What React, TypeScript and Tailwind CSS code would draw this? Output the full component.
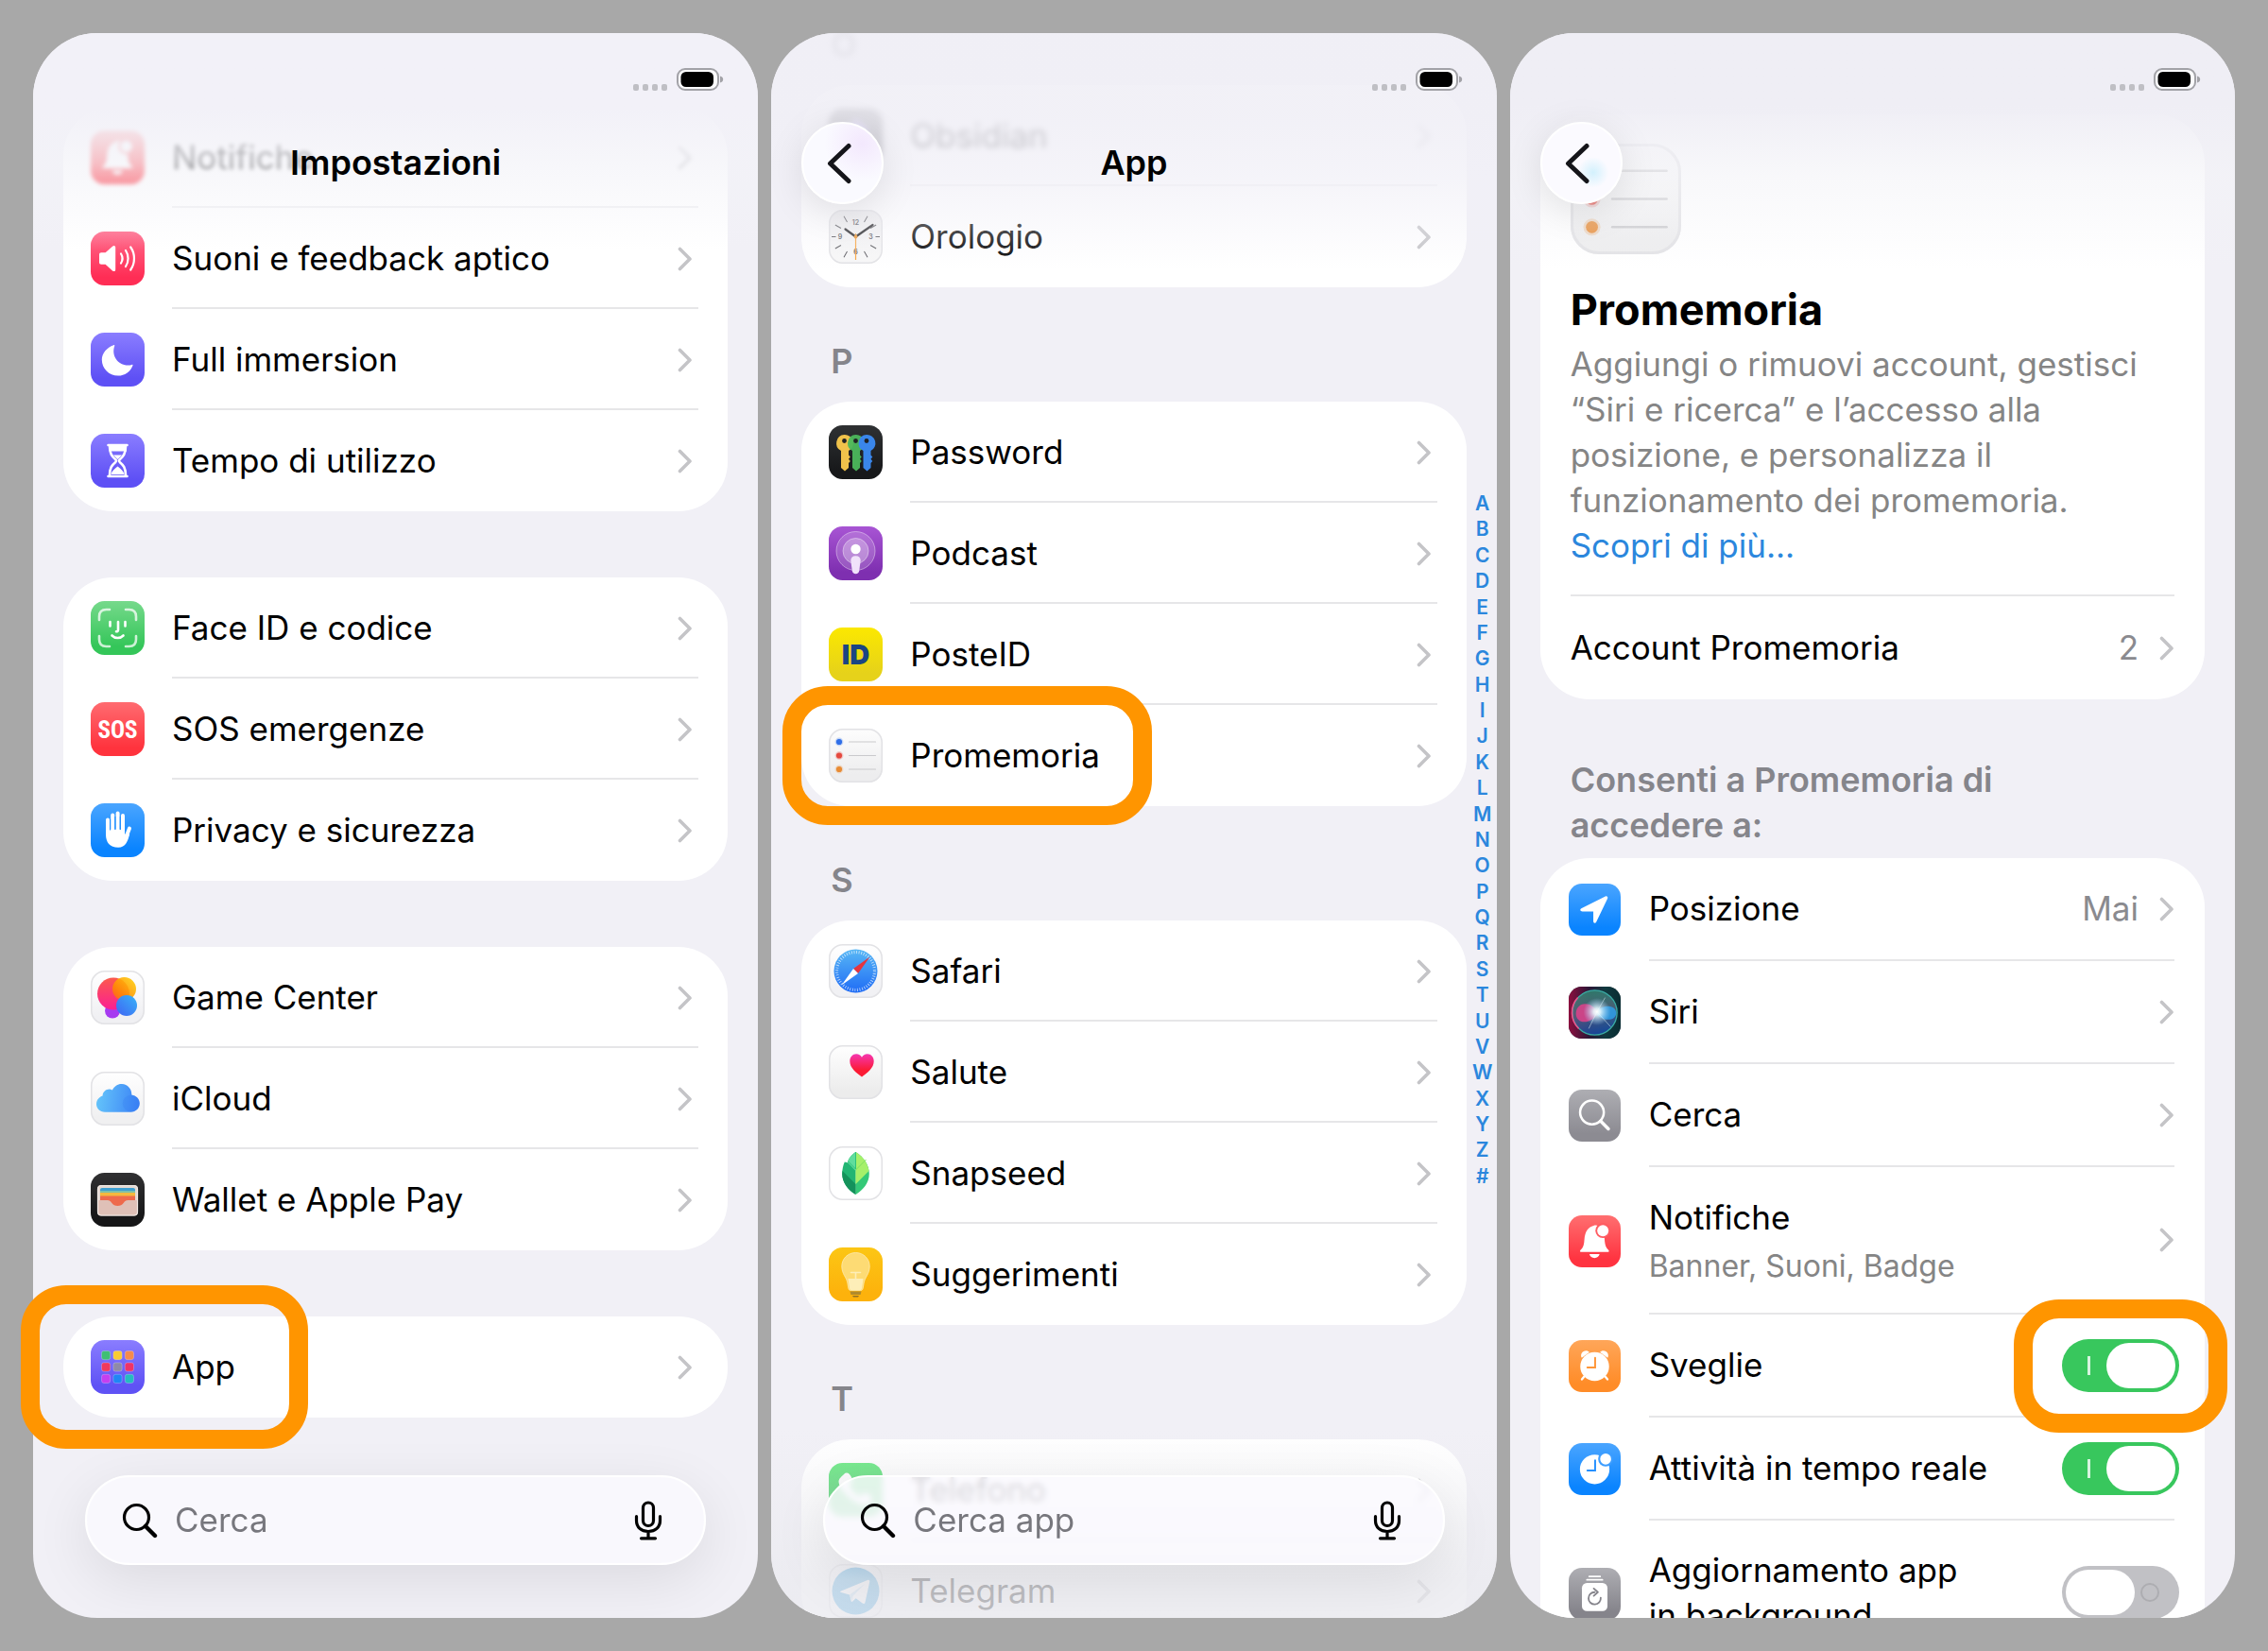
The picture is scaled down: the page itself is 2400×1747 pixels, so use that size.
import type { ReactNode } from "react";
import clsx from "clsx";

type IconName = keyof typeof icons;

type Item = {
  icon: IconName;
  label: string;
  className?: string;
};

const SETTINGS_GROUPS: Item[][] = [
  [
    { icon: "notifications", label: "Notifiche", className: "blur-[2px]" },
    { icon: "sounds", label: "Suoni e feedback aptico" },
    { icon: "focus", label: "Full immersion" },
    { icon: "screenTime", label: "Tempo di utilizzo" },
  ],
  [
    { icon: "faceId", label: "Face ID e codice" },
    { icon: "sos", label: "SOS emergenze" },
    { icon: "privacy", label: "Privacy e sicurezza" },
  ],
  [
    { icon: "gameCenter", label: "Game Center" },
    { icon: "icloud", label: "iCloud" },
    { icon: "wallet", label: "Wallet e Apple Pay" },
  ],
  [{ icon: "apps", label: "App" }],
];

const APP_SECTIONS: { letter: string; items: Item[]; className?: string }[] = [
  {
    letter: "O",
    className: "blur-[3px]",
    items: [
      { icon: "obsidian", label: "Obsidian", className: "blur-[3px]" },
      { icon: "clock", label: "Orologio" },
    ],
  },
  {
    letter: "P",
    items: [
      { icon: "passwords", label: "Password" },
      { icon: "podcast", label: "Podcast" },
      { icon: "posteId", label: "PosteID" },
      { icon: "reminders", label: "Promemoria" },
    ],
  },
  {
    letter: "S",
    items: [
      { icon: "safari", label: "Safari" },
      { icon: "health", label: "Salute" },
      { icon: "snapseed", label: "Snapseed" },
      { icon: "tips", label: "Suggerimenti" },
    ],
  },
  {
    letter: "T",
    items: [
      { icon: "phone", label: "Telefono" },
      { icon: "telegram", label: "Telegram" },
    ],
  },
];

const INDEX_LETTERS = "ABCDEFGHIJKLMNOPQRSTUVWXYZ#".split("");

function Tile({ id, from, to, outline, children }: { id: string; from: string; to: string; outline?: boolean; children?: ReactNode }) {
  return (
    <svg viewBox="0 0 57 57" className="h-full w-full" aria-hidden="true">
      <defs>
        <linearGradient id={`tile-${id}`} x1="0" y1="0" x2="0" y2="1">
          <stop offset="0" stopColor={from} />
          <stop offset="0.85" stopColor={to} />
        </linearGradient>
      </defs>
      <rect width="57" height="57" rx="14.500" fill={`url(#tile-${id})`} />
      {outline && <rect x="0.75" y="0.75" width="55.5" height="55.5" rx="14" fill="none" stroke="#e2e2e5" strokeWidth="1.5" />}
      {children}
    </svg>
  );
}

function ReminderLines() {
  return (
    <>
      {[
        [14, "#2f6fe8"],
        [28.5, "#e5493f"],
        [43, "#e88b34"],
      ].map(([y, color]) => (
        <g key={y}>
          <circle cx="11" cy={y} r="4.4" fill={color as string} opacity="0.25" />
          <circle cx="11" cy={y} r="3.1" fill={color as string} />
          <path d={`M21.5 ${y}H49.5`} stroke="#c9c9cc" strokeWidth="1.2" strokeLinecap="round" />
        </g>
      ))}
    </>
  );
}

const icons = {
  notifications: (
    <Tile id="notifications" from="#ff6f70" to="#ff3340">
      <path
        d="M12.4 39.5c0-1.2 1.2-2.300 2.400-3.600 1.600-1.800 2-4.600 2.400-9.400.6-8 3.600-13.500 11.300-15.500 1.300-.4 2.700-.2 3.600.3a8 8 0 0 0 5 12.800l2.100.3c.3 5.600.8 9.500 2.600 11.500 1.200 1.300 2.400 2.400 2.400 3.600 0 .4-.4.6-.9.6H13.300c-.5 0-.9-.2-.9-.6z"
        fill="#fff"
      />
      <circle cx="37.500" cy="16.800" r="8.200" fill="#ff5c62" />
      <circle cx="37.500" cy="16.800" r="6.200" fill="#fff" />
      <path d="M22.700 42.500h11.200c-.7 2.700-2.800 4.300-5.600 4.300s-4.900-1.600-5.600-4.300z" fill="#fff" />
    </Tile>
  ),
  sounds: (
    <Tile id="sounds" from="#ff6c8c" to="#ff2d55">
      <path d="M9 24.500c0-1.400.8-2.200 2.200-2.200h4.400l7.400-6.600c1.500-1.300 3.200-.7 3.200 1.200v23.300c0 1.900-1.700 2.500-3.200 1.200l-7.400-6.600h-4.400C9.800 34.800 9 34 9 32.600z" fill="#fff" />
      <path d="M32 23.500c1.900 3 1.900 7 0 10M37 20c3.400 5 3.400 12 0 17M42.200 16.500c5 7 5 17 0 24" fill="none" stroke="#fff" strokeWidth="2.200" strokeLinecap="round" />
    </Tile>
  ),
  focus: (
    <Tile id="focus" from="#8a7dff" to="#5e50f5">
      <path
        d="M24.200 13.200c.7-.3 1.300.3 1 1-3.600 9.800 3.400 20.400 14.500 20.300 1.300 0 2.500-.2 3.700-.6.800-.3 1.400.3 1 1.100C41.800 41.500 36 45.600 29 45.600c-9.700 0-17.200-7.500-17.200-17 0-6.800 5.300-13 12.400-15.400z"
        fill="#fff"
      />
    </Tile>
  ),
  screenTime: (
    <Tile id="screenTime" from="#8a7dff" to="#5e50f5">
      <path
        d="M18.500 12h20M18.500 45h20M20 13c0 8 2.500 11 6.300 14.200.9.800.9 1.900 0 2.700C22.500 33 20 36 20 44M37 13c0 8-2.500 11-6.300 14.200-.9.800-.9 1.900 0 2.700C34.500 33 37 36 37 44"
        fill="none"
        stroke="#fff"
        strokeWidth="2.600"
        strokeLinecap="round"
      />
      <path d="M19 12h19v6.500H20zM21.500 43c.7-3.700 3.600-5.700 7-8.500 3.400 2.800 6.300 4.800 7 8.500zM24 22.500h9l-4.500 4.500z" fill="#fff" />
    </Tile>
  ),
  faceId: (
    <Tile id="faceId" from="#76d98b" to="#34c659">
      <g fill="none" stroke="#fff" strokeWidth="2.600" strokeLinecap="round">
        <path opacity="0.75" d="M9 20v-3.500C9 11.500 11.500 9 16.500 9H20M37 9h3.500c5 0 7.500 2.500 7.500 7.500V20M48 37v3.500c0 5-2.500 7.500-7.500 7.500H37M20 48h-3.500C11.500 48 9 45.500 9 40.500V37" />
        <path d="M20.500 22v4.500M36.500 22v4.500M29 22v8.500c0 1.200-.7 1.800-2 1.800M22.500 36.500c3.400 3.400 8.600 3.400 12 0" />
      </g>
    </Tile>
  ),
  sos: (
    <Tile id="sos" from="#ff6b70" to="#ff333d">
      <text x="28.500" y="38" textAnchor="middle" fill="#fff" fontFamily="'Liberation Sans Narrow', 'Roboto Condensed', Roboto, sans-serif" fontWeight="700" fontSize="25">
        SOS
      </text>
    </Tile>
  ),
  privacy: (
    <Tile id="privacy" from="#4aa5ff" to="#0a84ff">
      <g stroke="#fff" strokeWidth="4" strokeLinecap="round" fill="none">
        <path d="M18 17.500V32M23.200 12.500V30M28.600 10.500V30M34 13V30M41 26.500l-3.500 9" />
      </g>
      <path d="M16 29c0-2 20 -2 20 0v4.500l1.500-2.300 3.700 1.600c-2 7-4.200 14-12 14C20 46.800 16 41 16 33z" fill="#fff" />
      <path d="M20.600 17v11.500M25.900 14v14M31.300 14v14" stroke="#1f8eff" strokeWidth="1" />
    </Tile>
  ),
  gameCenter: (
    <Tile id="gameCenter" from="#ffffff" to="#f0f0f3" outline>
      <defs>
        <linearGradient id="gc-red" x1="0.300" y1="0" x2="0.300" y2="1">
          <stop offset="0" stopColor="#fb5a4c" />
          <stop offset="1" stopColor="#fb1e93" />
        </linearGradient>
        <linearGradient id="gc-yellow" x1="1" y1="0" x2="0" y2="1">
          <stop offset="0" stopColor="#ffd60a" />
          <stop offset="0.650" stopColor="#ff8c00" />
          <stop offset="1" stopColor="#ff5a1f" />
        </linearGradient>
        <linearGradient id="gc-blue" x1="1" y1="0" x2="0" y2="1">
          <stop offset="0" stopColor="#38b4f8" />
          <stop offset="1" stopColor="#3f63f3" />
        </linearGradient>
      </defs>
      <circle cx="23" cy="42.500" r="8" fill="#a63af0" />
      <circle cx="24" cy="24.500" r="17" fill="url(#gc-red)" />
      <circle cx="35.500" cy="19.500" r="12.500" fill="url(#gc-yellow)" opacity="0.900" />
      <circle cx="38" cy="37" r="11" fill="url(#gc-blue)" />
    </Tile>
  ),
  icloud: (
    <Tile id="icloud" from="#ffffff" to="#f0f0f1" outline>
      <defs>
        <linearGradient id="cloud" x1="0" y1="0.500" x2="1" y2="0.600">
          <stop offset="0" stopColor="#64c4fa" />
          <stop offset="1" stopColor="#3b82f6" />
        </linearGradient>
      </defs>
      <path
        d="M15 42.700c-5.200 0-9-3.700-9-8.500 0-4.500 3-7.600 6.600-8.800.2-5.200 5.800-8.400 10.300-6C25 15.200 29 12.700 33 13c6 .5 10.300 5 10.300 11v.600c4.800.700 8.500 4.300 8.500 9 0 5.200-4 9.100-9.300 9.100z"
        fill="url(#cloud)"
      />
      <circle cx="42.600" cy="33.500" r="8.800" fill="#2f74f0" opacity="0.200" />
    </Tile>
  ),
  wallet: (
    <Tile id="wallet" from="#303032" to="#161617">
      <rect x="7" y="13" width="43" height="32.500" rx="4" fill="#e4d9d3" />
      <path d="M10 19v-1c0-1.200.9-2 2-2h33c1.100 0 2 .8 2 2v1z" fill="#3f9fd0" />
      <path d="M10 19h37v3H10z" fill="#7fc1a8" />
      <path d="M10 21h37v4H10z" fill="#f4b93e" />
      <path d="M10 24.500h37V35H10z" fill="#ee6a4c" />
      <path d="M7.500 29h10.300c2 0 3 1 4.300 2.800 1.700 2.200 3.600 3.300 6.400 3.300s4.700-1.100 6.400-3.300c1.300-1.800 2.300-2.800 4.300-2.800h10.300v13c0 2-1.200 3-3 3h-36c-1.800 0-3-1-3-3z" fill="#dfc0b7" />
      <rect x="7.500" y="13.500" width="42" height="31.500" rx="3.800" fill="none" stroke="#f1eae6" strokeWidth="1.200" />
    </Tile>
  ),
  apps: (
    <Tile id="apps" from="#8a7dff" to="#5f52f5">
      {["#3fbf74", "#f9cb33", "#f58b4c", "#f0395c", "#8f8aa8", "#ee3468", "#c63ff0", "#1f86f5", "#25bcc0"].map((fill, i) => (
        <rect
          key={fill}
          x={11.5 + (i % 3) * 12.4}
          y={11.5 + Math.floor(i / 3) * 12.4}
          width="9.200"
          height="9.200"
          rx="2.400"
          fill={fill}
          stroke="#fff"
          strokeOpacity="0.300"
          strokeWidth="0.800"
        />
      ))}
    </Tile>
  ),
  obsidian: (
    <Tile id="obsidian" from="#4a4a4e" to="#5f5f68">
      <path d="M28 10l12 9 3 15-10 14-16-6-3-14z" fill="#a58af5" />
    </Tile>
  ),
  clock: (
    <Tile id="clock" from="#ededee" to="#f7f7f7" outline>
      {Array.from({ length: 12 }, (_, i) => i)
        .filter((i) => i % 3 !== 0)
        .map((i) => (
          <path key={i} d="M28.500 3.500v7" transform={`rotate(${i * 30} 28.500 28.500)`} stroke="#55555a" strokeWidth="1" />
        ))}
      <path d="M3 28.500h4.500M49.500 28.500H54" stroke="#55555a" strokeWidth="1" />
      <g fill="#55555a" fontFamily="Inter, sans-serif" fontWeight="600" fontSize="7" textAnchor="middle">
        <text x="28.500" y="15.500">12</text>
        <text x="44.500" y="31">3</text>
        <text x="28.500" y="46.500">6</text>
        <text x="12" y="31">9</text>
      </g>
      <path d="M28.500 28.500L17.500 20.500M28.500 28.500L46.500 16" stroke="#1c1c1e" strokeWidth="2.200" strokeLinecap="round" />
      <path d="M28.500 25v28" stroke="#f7a33c" strokeWidth="1.200" />
      <circle cx="28.500" cy="28.500" r="1.900" fill="#e8912c" />
    </Tile>
  ),
  passwords: (
    <Tile id="passwords" from="#2f3133" to="#17181a">
      {[
        [16.5, "#f0c24b", 1],
        [28.5, "#4cb85c", 0.95],
        [40, "#3a86ea", 1],
      ].map(([x, fill, opacity]) => (
        <g key={x} transform={`translate(${x} 0)`} opacity={opacity}>
          <path d="M0 10a9 9 0 0 1 4.500 17v4.500l1.800 2-1.800 2.200 1.800 2.200-1.800 2.100v5L.5 48.500-3.500 45V27A9 9 0 0 1 0 10z" fill={fill as string} />
          <circle cx="0" cy="16.500" r="2.400" fill="#202224" />
        </g>
      ))}
    </Tile>
  ),
  podcast: (
    <Tile id="podcast" from="#a855d4" to="#7e2fb0">
      <circle cx="28.500" cy="26" r="20.500" fill="#fff" opacity="0.180" />
      <circle cx="28.500" cy="26" r="13.500" fill="#fff" opacity="0.280" />
      <circle cx="28.500" cy="26" r="20.500" fill="none" stroke="#fff" strokeOpacity="0.400" />
      <circle cx="28.500" cy="26" r="13.500" fill="none" stroke="#fff" strokeOpacity="0.400" />
      <circle cx="28.500" cy="24" r="5.200" fill="#fff" />
      <path d="M23.300 36c0-3 2-4.800 5.200-4.800s5.200 1.800 5.200 4.800l-1.400 10.500c-.4 2.600-1.600 3.800-3.800 3.800s-3.400-1.200-3.800-3.800z" fill="#f1e2fa" />
    </Tile>
  ),
  posteId: (
    <Tile id="posteId" from="#fbe800" to="#e6d21a">
      <text x="28.500" y="39" textAnchor="middle" fill="#1b4583" fontFamily="Inter, sans-serif" fontWeight="900" fontSize="29">
        ID
      </text>
    </Tile>
  ),
  reminders: (
    <Tile id="reminders" from="#fdfdfd" to="#ededee" outline>
      <ReminderLines />
    </Tile>
  ),
  safari: (
    <Tile id="safari" from="#ffffff" to="#f1f1f4" outline>
      <defs>
        <linearGradient id="compass" x1="0" y1="0" x2="0" y2="1">
          <stop offset="0" stopColor="#58b7f5" />
          <stop offset="1" stopColor="#1f6cf5" />
        </linearGradient>
      </defs>
      <circle cx="28.500" cy="28.500" r="23" fill="url(#compass)" />
      <circle cx="28.500" cy="28.500" r="20" fill="none" stroke="#fff" strokeOpacity="0.650" strokeWidth="3.200" strokeDasharray="0.900 1.718" />
      <path d="M43.500 13.500L26 26l5 5z" fill="#e5343f" />
      <path d="M13.500 43.500L26 26l5 5z" fill="#fff" />
    </Tile>
  ),
  health: (
    <Tile id="health" from="#ffffff" to="#ececec" outline>
      <defs>
        <linearGradient id="heart" x1="0" y1="0" x2="0" y2="1">
          <stop offset="0" stopColor="#f536b0" />
          <stop offset="0.700" stopColor="#fb1b35" />
        </linearGradient>
      </defs>
      <path d="M35 33.500C29 29 22.300 24 22.300 17c0-4.500 3-7.700 6.800-7.700 2.700 0 4.700 1.200 5.900 3.400 1.200-2.200 3.200-3.400 5.900-3.400 3.800 0 6.800 3.200 6.800 7.700 0 7-6.700 12-12.700 16.500z" fill="url(#heart)" />
    </Tile>
  ),
  snapseed: (
    <Tile id="snapseed" from="#ffffff" to="#ffffff" outline>
      <path d="M28.500 6v45C20 46 14.200 38 14.200 29c0-4.500 1-9 2.600-12.500l3.200.8c.5-4.500 4.500-8.800 8.500-11.300z" fill="#22b573" />
      <path d="M28.500 6c8 5 14.300 13.500 14.300 23S36.500 46 28.500 51z" fill="#34c977" />
      <path d="M28.500 6c7 4.300 12.500 11 14 20L28.500 40z" fill="#a6f06a" />
      <path d="M28.500 6c-4 2.500-8 6.800-8.500 11.300L28.500 26z" fill="#5fdd9c" />
      <path d="M14.500 26l14 14v11C20 46 14.200 38 14.200 29z" fill="#14925b" />
      <path d="M28.500 24l-8-8M28.500 24V6" stroke="#2fc27c" strokeWidth="1" />
      <path d="M28.500 25l11-11" stroke="#7fe05f" strokeWidth="1" />
    </Tile>
  ),
  tips: (
    <Tile id="tips" from="#fcc614" to="#fdb20c">
      <path
        d="M28.500 5.500c8.300 0 14.700 6.400 14.700 14.500 0 8-5 11.500-6 17.500l-1 5.500c-.3 1.700-1.200 2.600-2.800 2.600h-9.800c-1.600 0-2.500-.9-2.800-2.600l-1-5.500c-1-6-6-9.500-6-17.500 0-8.100 6.400-14.500 14.700-14.500z"
        fill="#fddb74"
        stroke="#fdeab0"
        strokeWidth="0.800"
      />
      <path d="M20.500 33h16l-1.500 10c-.2 1.500-1 2.300-2.400 2.300h-8.200c-1.400 0-2.200-.8-2.400-2.300z" fill="#fdeeb8" />
      <path d="M23.500 26.500h10M28.500 26.500V43" stroke="#fdeeb8" strokeWidth="1.600" fill="none" strokeLinecap="round" />
      <path d="M22.500 46.500h12l-1 3.500h-10z" fill="#b08a2c" />
      <path d="M25 51h7l-1 1.500h-5z" fill="#8f7026" />
    </Tile>
  ),
  phone: (
    <Tile id="phone" from="#5fe87a" to="#34c759">
      <path d="M16 12c3-3 6-1 8 3 1.500 3 1 5-1.500 7-1 1-1 2 0 4 2 3.500 4.500 6 8 8.500 1.800 1.200 3 1.200 4-.2 2-2.600 4-3 7-1.300 4 2.300 5.500 5 3 8-4 5-10 4.500-18-1S11 27 10.500 20c0-3.500 3-5.500 5.500-8z" fill="#fff" />
    </Tile>
  ),
  telegram: (
    <Tile id="telegram" from="#fdfdfe" to="#fdfdfe" outline>
      <circle cx="28.500" cy="28.500" r="25" fill="#2f9fe0" />
      <path d="M13 28.500l28-11.500c1.500-.600 2.600.3 2.200 2l-4.700 21.500c-.3 1.500-1.500 1.900-2.800 1l-7-5.300-3.500 3.400c-.8.7-1.400.5-1.600-.6L22 32.500l-9-2.500c-1.200-.4-1.200-1 0-1.500z" fill="#fff" />
      <path d="M22 32.500l16-11.500-12.500 13-1 5z" fill="#b9dcf2" />
    </Tile>
  ),
  location: (
    <Tile id="location" from="#4aa5ff" to="#0a84ff">
      <path d="M13.800 27.200L40.200 14c1.600-.8 3.200.8 2.400 2.400L30.300 42c-1 2-3.300 1.500-3.300-.8V30.500H15c-2.300 0-3-2.400-1.200-3.300z" fill="#fff" />
    </Tile>
  ),
  siri: (
    <Tile id="siri" from="#22353a" to="#131c3a">
      <defs>
        <linearGradient id="siri-bg" x1="0" y1="0" x2="1" y2="0">
          <stop offset="0" stopColor="#8d0f3f" />
          <stop offset="0.400" stopColor="#2a1636" />
          <stop offset="0.700" stopColor="#10393f" />
          <stop offset="1" stopColor="#0a2d33" />
        </linearGradient>
        <linearGradient id="siri-orb" x1="0.300" y1="0" x2="0.500" y2="1">
          <stop offset="0" stopColor="#2f8a72" />
          <stop offset="0.500" stopColor="#54657f" />
          <stop offset="1" stopColor="#1449a8" />
        </linearGradient>
        <radialGradient id="siri-glow">
          <stop offset="0" stopColor="#fff" />
          <stop offset="0.250" stopColor="#e9fbff" stopOpacity="0.900" />
          <stop offset="1" stopColor="#9fd8ff" stopOpacity="0" />
        </radialGradient>
      </defs>
      <rect width="57" height="57" rx="14.500" fill="url(#siri-bg)" />
      <circle cx="28.500" cy="28.500" r="24.500" fill="url(#siri-orb)" opacity="0.850" />
      <circle cx="28.500" cy="28.500" r="24.500" fill="none" stroke="#3aa9a3" strokeWidth="1.400" />
      <path d="M10 12a24.500 24.500 0 0 0 1 34" fill="none" stroke="#f0518a" strokeWidth="1.600" />
      <path d="M32 29C26 15 9 16 8 28.500S24 43 32 29z" fill="#d8428a" opacity="0.900" />
      <path d="M30 29c5-10 22-10 22 0s-17 9-22 0z" fill="#2f9fe8" opacity="0.850" />
      <path d="M31 27.500L46 44M31 27.500L22 46M31 27.500L40 12" stroke="#e9fbff" strokeOpacity="0.500" strokeWidth="1" />
      <circle cx="31" cy="27.500" r="15" fill="url(#siri-glow)" />
    </Tile>
  ),
  search: (
    <Tile id="search" from="#aeaeb3" to="#8c8b92">
      <circle cx="25.500" cy="25" r="13" fill="none" stroke="#fff" strokeWidth="2.600" />
      <path d="M35 34.500l8.500 8.500" stroke="#fff" strokeWidth="3.600" strokeLinecap="round" />
    </Tile>
  ),
  alarms: (
    <Tile id="alarms" from="#ffa659" to="#ff8c28">
      <circle cx="28.500" cy="29" r="15.800" fill="#fff" />
      <path d="M17 40l-2.500 3M40 40l2.500 3" stroke="#fff" strokeWidth="2.400" strokeLinecap="round" />
      <path d="M14.300 19.500c-2-3.500.5-7.700 4.700-7.900 1.500 0 2.800.6 3.700 1.600zM42.700 19.500c2-3.500-.5-7.700-4.700-7.900-1.500 0-2.800.6-3.700 1.600z" fill="#fff" />
      <path d="M29 19.500V30h-8.500" fill="none" stroke="#ff9638" strokeWidth="2" strokeLinecap="round" />
    </Tile>
  ),
  liveActivities: (
    <Tile id="liveActivities" from="#4aa5ff" to="#0a84ff">
      <circle cx="28.500" cy="28.800" r="16.200" fill="#fff" />
      <circle cx="40.500" cy="17.500" r="8.200" fill="#3c9dff" />
      <circle cx="40.500" cy="17.500" r="6" fill="#fff" />
      <path d="M29 19V30h-8.500" fill="none" stroke="#2590ff" strokeWidth="2" strokeLinecap="round" />
    </Tile>
  ),
  backgroundRefresh: (
    <Tile id="backgroundRefresh" from="#aeaeb3" to="#85848b">
      <path d="M22.500 9.500h12M20 13.200h17" stroke="#fff" strokeWidth="1.800" strokeLinecap="round" />
      <rect x="14.500" y="16.500" width="28" height="31" rx="5.500" fill="#fff" />
      <path d="M28.500 26.700a6.700 6.700 0 1 0 6.600 6" fill="none" stroke="#85848b" strokeWidth="1.900" strokeLinecap="round" />
      <path d="M27.500 22.700l4.500 4-4.500 4" fill="none" stroke="#85848b" strokeWidth="1.900" strokeLinecap="round" strokeLinejoin="round" />
    </Tile>
  ),
};

function Chevron({ className }: { className?: string }) {
  return (
    <svg viewBox="0 0 16 26" className={clsx("h-[26px] w-4 shrink-0", className)} aria-hidden="true">
      <path d="M2.500 2.500L13 13 2.500 23.500" fill="none" stroke="#c4c4c7" strokeWidth="3.600" strokeLinecap="round" strokeLinejoin="round" />
    </svg>
  );
}

function Card({ children, className }: { children: ReactNode; className?: string }) {
  return <div className={clsx("mx-8 rounded-[52px] bg-white", className)}>{children}</div>;
}

function NavRow({ item, last }: { item: Item; last: boolean }) {
  return (
    <li>
      <a href="#" className="flex h-[107px] items-center pl-[29px]">
        <span className={clsx("size-[57px] shrink-0", item.className)}>{icons[item.icon]}</span>
        <span
          className={clsx(
            "mr-[31px] ml-[29px] flex h-full flex-1 items-center border-b-2 pt-0.5 pr-1.5",
            last ? "border-transparent" : item.className ? "border-[#f0f0f2]" : "border-[#e6e6e8]",
          )}
        >
          <span className={clsx("flex-1", item.className)}>{item.label}</span>
          <Chevron className={item.className} />
        </span>
      </a>
    </li>
  );
}

function NavList({ items }: { items: Item[] }) {
  return (
    <Card>
      <ul>
        {items.map((item, index) => (
          <NavRow key={item.label} item={item} last={index === items.length - 1} />
        ))}
      </ul>
    </Card>
  );
}

function PermissionRow({ icon, last, children, as: Tag = "div" }: { icon: IconName; last?: boolean; children: ReactNode; as?: "div" | "label" }) {
  return (
    <li>
      <Tag className="flex items-center pl-[30px]">
        <span className="size-[55px] shrink-0">{icons[icon]}</span>
        <span className={clsx("mr-8 ml-[30px] flex min-h-[109px] flex-1 items-center border-b-2", last ? "border-transparent" : "border-[#e6e6e8]")}>
          {children}
        </span>
      </Tag>
    </li>
  );
}

function Toggle({ on }: { on?: boolean }) {
  return (
    <input
      type="checkbox"
      role="switch"
      defaultChecked={on}
      className="relative -mr-[5px] h-14 w-[124px] shrink-0 appearance-none rounded-full bg-[#c1c1c5] before:absolute before:top-1 before:left-1 before:h-12 before:w-[73px] before:rounded-full before:bg-white after:absolute after:top-[18px] after:right-[21px] after:size-5 after:rounded-full after:border-2 after:border-[#adadb1] checked:bg-[#38c75d] checked:before:left-[47px] checked:after:right-[94px] checked:after:w-[3px] checked:after:rounded-none checked:after:border-0 checked:after:bg-white/80"
    />
  );
}

function StatusBar() {
  return (
    <div className="absolute top-[37px] right-9 flex items-end gap-[10px]">
      <div className="flex gap-1">
        {[0, 1, 2, 3].map((dot) => (
          <span key={dot} className="h-[7px] w-1.5 rounded-[2px] bg-[#bfbfc4]" />
        ))}
      </div>
      <svg viewBox="0 0 50 24" className="h-6 w-[50px]" aria-hidden="true">
        <rect x="1" y="1" width="43" height="22" rx="8" fill="#fbfbfd" stroke="#a2a2a7" strokeWidth="2" />
        <rect x="4.500" y="4" width="34.500" height="16" rx="5.500" fill="#000" />
        <path d="M46 8.500c2 .5 3.200 1.800 3.200 3.500s-1.200 3-3.200 3.500z" fill="#a2a2a7" />
      </svg>
    </div>
  );
}

function BackButton({ tint }: { tint: string }) {
  return (
    <button
      type="button"
      aria-label="Indietro"
      className={clsx(
        "absolute top-[94px] left-8 flex size-[87px] items-center justify-center rounded-full border-2 border-white shadow-[0_8px_40px_rgba(0,0,0,0.1)] backdrop-blur-[8px]",
        tint,
      )}
    >
      <svg viewBox="0 0 28 44" className="mr-2 h-11 w-7" aria-hidden="true">
        <path d="M24 3.500L4.500 22 24 40.500" fill="none" stroke="#15151a" strokeWidth="5" strokeLinecap="round" strokeLinejoin="round" />
      </svg>
    </button>
  );
}

function SearchBar({ placeholder }: { placeholder: string }) {
  return (
    <label className="absolute inset-x-[55px] bottom-14 flex h-[95px] items-center rounded-full border-2 border-white bg-[#fbfaff]/80 pr-11 pl-[37px] shadow-[0_16px_60px_rgba(0,0,0,0.09)] backdrop-blur-[3px]">
      <svg viewBox="0 0 38 38" className="size-[38px] shrink-0" aria-hidden="true">
        <circle cx="15.500" cy="15.500" r="13" fill="none" stroke="#000" strokeWidth="3.200" />
        <path d="M25 25l10 10" stroke="#000" strokeWidth="4.400" strokeLinecap="round" />
      </svg>
      <input type="search" placeholder={placeholder} className="ml-[18px] min-w-0 flex-1 bg-transparent outline-none placeholder:text-[#77777d]" />
      <svg viewBox="0 0 30 42" className="h-[42px] w-[30px] shrink-0" aria-hidden="true" fill="none" stroke="#000" strokeWidth="3.200" strokeLinecap="round">
        <rect x="9.500" y="2" width="11" height="24.500" rx="5.500" />
        <path d="M2.500 16.500v4.500c0 7 5 11.500 12.500 11.500S27.500 28 27.500 21v-4.500M15 33v6.500M7.500 39.800h15" />
      </svg>
    </label>
  );
}

function Highlight({ className }: { className: string }) {
  return <div className={clsx("pointer-events-none absolute rounded-[48px] border-[20px] border-[#ff9500]", className)} />;
}

function Phone({ children, highlight }: { children: ReactNode; highlight: string }) {
  return (
    <section className="relative min-h-0">
      <div className="relative h-full overflow-hidden rounded-[68px] bg-[#f1f0f6]">{children}</div>
      <Highlight className={highlight} />
    </section>
  );
}

function TopFade({ className }: { className: string }) {
  return <div className={clsx("pointer-events-none absolute inset-x-0 top-0 bg-linear-to-b", className)} />;
}

function SettingsScreen() {
  return (
    <Phone highlight="top-[1325px] -left-[13px] h-[173px] w-[304px]">
      <div className="flex flex-col gap-[70px] pt-[78px]">
        {SETTINGS_GROUPS.map((items) => (
          <NavList key={items[0].label} items={items} />
        ))}
      </div>
      <TopFade className="h-[230px] from-[#f2f1f8] from-35% via-[#f3f3f8]/70 via-60% to-white/0" />
      <StatusBar />
      <h1 className="absolute inset-x-0 top-[113px] text-center text-[36px] leading-[48px] font-semibold">Impostazioni</h1>
      <SearchBar placeholder="Cerca" />
    </Phone>
  );
}

function AppsScreen() {
  return (
    <Phone highlight="top-[691px] left-3 h-[147px] w-[391px]">
      <div className="-mt-[66px]">
        {APP_SECTIONS.map((section) => (
          <div key={section.letter}>
            <h2 className={clsx("flex h-[121px] items-end px-[63px] pb-[31px] text-[36px] leading-6 font-semibold text-[#85858b]", section.className)}>
              {section.letter}
            </h2>
            <NavList items={section.items} />
          </div>
        ))}
      </div>
      <TopFade className="h-[250px] from-[#f0eff6]/90 from-35% via-[#f1f0f7]/75 via-60% to-white/0" />
      <div className="absolute inset-x-0 bottom-0 h-[200px] bg-linear-to-b from-[#f0f0f5]/0 to-[#ebebf0]/80 to-80%" />
      <StatusBar />
      <h1 className="absolute inset-x-0 top-[113px] text-center text-[36px] leading-[48px] font-semibold">App</h1>
      <BackButton tint="bg-[radial-gradient(circle_at_75%_25%,#f3e8fd,#fafaff_45%)]" />
      <nav className="absolute top-[484px] right-0 flex h-[739px] w-[30px] flex-col items-center justify-between text-[21px] leading-[27px] font-semibold text-[#2b87dd]">
        {INDEX_LETTERS.map((letter) => (
          <a key={letter} href="#">
            {letter}
          </a>
        ))}
      </nav>
      <SearchBar placeholder="Cerca app" />
    </Phone>
  );
}

function RemindersScreen() {
  return (
    <Phone highlight="top-[1340px] right-2 h-[141px] w-[226px]">
      <div className="pt-[86px]">
        <Card>
          <div className="mx-8 border-b-2 border-[#e6e6e8] pt-[31px] pb-7">
            <div className="size-[117px]">{icons.reminders}</div>
            <h1 className="mt-8 text-[45px] leading-[54px] font-bold">Promemoria</h1>
            <p className="mt-1.5 leading-[48px] text-[#858585]">
              Aggiungi o rimuovi account, gestisci “Siri e ricerca” e l’accesso alla posizione, e personalizza il funzionamento dei promemoria.
            </p>
            <a href="#" className="block leading-[48px] text-[#2b87dd]">
              Scopri di più...
            </a>
          </div>
          <a href="#" className="mx-8 flex h-[109px] items-center">
            <span className="flex-1">Account Promemoria</span>
            <span className="mr-[22px] text-[#8a8a8f]">2</span>
            <Chevron />
          </a>
        </Card>
        <h2 className="mt-[61px] mb-[11px] pr-40 pl-16 text-[36px] leading-[48px] font-semibold text-[#85858b]">Consenti a Promemoria di accedere a:</h2>
        <Card>
          <ul>
            <PermissionRow icon="location">
              <a href="#" className="flex flex-1 items-center">
                <span className="flex-1">Posizione</span>
                <span className="mr-[22px] text-[#8a8a8f]">Mai</span>
                <Chevron />
              </a>
            </PermissionRow>
            <PermissionRow icon="siri">
              <a href="#" className="flex flex-1 items-center justify-between">
                Siri
                <Chevron />
              </a>
            </PermissionRow>
            <PermissionRow icon="search">
              <a href="#" className="flex flex-1 items-center justify-between">
                Cerca
                <Chevron />
              </a>
            </PermissionRow>
            <PermissionRow icon="notifications">
              <a href="#" className="flex h-[154px] flex-1 items-center justify-between">
                <span className="flex flex-col gap-1 pt-1 leading-[48px]">
                  Notifiche
                  <span className="text-[32px] text-[#858585]">Banner, Suoni, Badge</span>
                </span>
                <Chevron />
              </a>
            </PermissionRow>
            <PermissionRow icon="alarms" as="label">
              <span className="flex-1">Sveglie</span>
              <Toggle on />
            </PermissionRow>
            <PermissionRow icon="liveActivities" as="label">
              <span className="flex-1">Attività in tempo reale</span>
              <Toggle on />
            </PermissionRow>
            <PermissionRow icon="backgroundRefresh" as="label" last>
              <span className="flex-1 py-7 pr-24 leading-[48px]">Aggiornamento app in background</span>
              <Toggle />
            </PermissionRow>
          </ul>
        </Card>
      </div>
      <TopFade className="h-[250px] from-[#efeef5] from-30% via-[#f3f3f7]/60 via-60% to-white/0" />
      <StatusBar />
      <BackButton tint="bg-[radial-gradient(circle_at_65%_62%,#d3f1fd,#fbfaff_22%)]" />
    </Phone>
  );
}

export default function App() {
  return (
    <main className="grid h-screen grid-cols-3 gap-[14px] bg-[#a8a8a8] p-[35px] font-['Inter',sans-serif] text-[35px] text-black">
      <SettingsScreen />
      <AppsScreen />
      <RemindersScreen />
    </main>
  );
}
